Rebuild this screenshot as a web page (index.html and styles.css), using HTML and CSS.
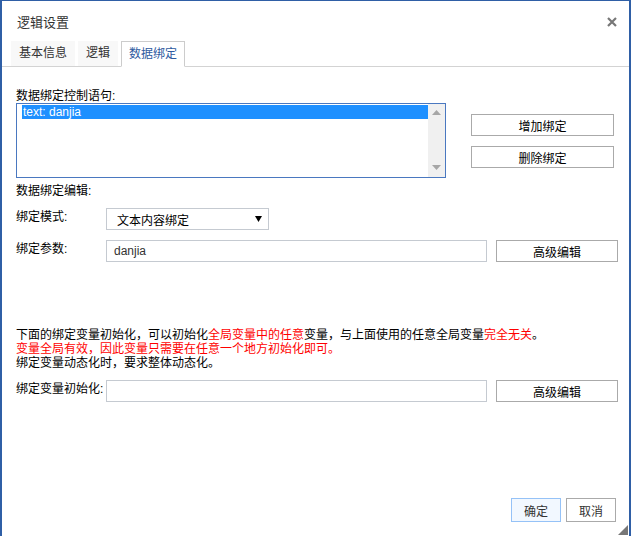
FILE: index.html
```html
<!DOCTYPE html>
<html lang="zh-CN">
  <head>
    <meta charset="UTF-8" />
    <meta name="viewport" content="width=device-width, initial-scale=1.0" />
    <title>逻辑设置</title>
    <link rel="stylesheet" href="styles.css">
  </head>
  <body>
    <div class="dialog">
      <div class="dialog-head">
        <span class="dialog-title">逻辑设置</span>
        <span class="dialog-close">
          <svg width="10" height="10" viewBox="0 0 10 10">
            <path d="M1 1 L9 9 M9 1 L1 9" stroke="#777" stroke-width="2.2" />
          </svg>
        </span>
      </div>

      <div class="tabs">
        <div class="tab">基本信息</div>
        <div class="tab">逻辑</div>
        <div class="tab tab-active">数据绑定</div>
      </div>

      <div class="panel">
        <p class="caption caption-top">数据绑定控制语句:</p>
        <div class="bind-list-row">
          <div class="listbox">
            <div class="listbox-items">
              <div class="listbox-item selected">text: danjia</div>
            </div>
            <div class="scrollbar">
              <svg width="9" height="5" viewBox="0 0 9 5">
                <path d="M0 5 L4.5 0 L9 5 Z" fill="#a6a6a6" />
              </svg>
              <svg width="9" height="5" viewBox="0 0 9 5">
                <path d="M0 0 L9 0 L4.5 5 Z" fill="#a6a6a6" />
              </svg>
            </div>
          </div>
          <div class="side-buttons">
            <button class="btn btn-side">增加绑定</button>
            <button class="btn btn-side">删除绑定</button>
          </div>
        </div>

        <p class="caption caption-edit">数据绑定编辑:</p>

        <div class="form-row">
          <span class="form-label">绑定模式:</span>
          <div class="select">
            <span>文本内容绑定</span>
            <svg width="7" height="6" viewBox="0 0 7 6">
              <path d="M0 0 L7 0 L3.5 6 Z" fill="#000" />
            </svg>
          </div>
        </div>

        <div class="form-row">
          <span class="form-label">绑定参数:</span>
          <div class="text-input">danjia</div>
          <button class="btn btn-edit">高级编辑</button>
        </div>

        <p class="note">
          下面的绑定变量初始化，可以初始化<span class="red">全局变量中的任意</span>变量，与上面使用的任意全局变量<span class="red">完全无关</span>。<br>
          <span class="red">变量全局有效，因此变量只需要在任意一个地方初始化即可。</span><br>
          绑定变量动态化时，要求整体动态化。
        </p>

        <div class="form-row">
          <span class="form-label">绑定变量初始化:</span>
          <div class="text-input"></div>
          <button class="btn btn-edit">高级编辑</button>
        </div>
      </div>

      <div class="dialog-foot">
        <button class="btn btn-foot btn-ok">确定</button>
        <button class="btn btn-foot">取消</button>
      </div>

      <svg class="grip" width="10" height="10" viewBox="0 0 10 10">
        <path d="M10 0 L10 10 L0 10 Z" fill="#777" />
      </svg>
    </div>
  </body>
</html>
```

FILE: styles.css
```css
html,
body {
  margin: 0;
  height: 100%;
  overflow: hidden;
  background-color: white;
}

body {
  font-family: "Liberation Sans", "Noto Sans CJK SC", sans-serif;
  font-size: 12px;
  color: #000;
}

.dialog {
  position: relative;
  box-sizing: border-box;
  width: 631px;
  height: 536px;
  border-top: 1px solid #2f5fa6;
  border-left: 2px solid #2f5fa6;
  border-right: 2px solid #2f5fa6;
}

.dialog-head {
  height: 40px;
  display: flex;
  align-items: center;
  justify-content: space-between;
  padding: 0 12px 0 15px;
}

.dialog-title {
  font-size: 13px;
  color: #333;
}

.dialog-close {
  display: flex;
  margin-top: 2px;
}

.tabs {
  display: flex;
  align-items: flex-end;
  gap: 3px;
  height: 25px;
  padding-left: 9px;
  border-bottom: 1px solid #d3d3d3;
}

.tab {
  box-sizing: border-box;
  height: 25px;
  line-height: 25px;
  padding: 0 8px;
  background-color: #f8f8f8;
  color: #333;
}

.tab-active {
  height: 26px;
  line-height: 24px;
  margin-bottom: -1px;
  padding: 0 7px;
  background-color: white;
  color: #2e5aa0;
  border: 1px solid #cccccc;
  border-bottom-color: white;
}

.panel {
  padding: 0 8px 0 14px;
}

.caption {
  margin: 0;
  line-height: 14px;
}

.caption-top {
  margin-top: 22px;
}

.caption-edit {
  margin-top: 6px;
}

.bind-list-row {
  display: flex;
}

.listbox {
  box-sizing: border-box;
  width: 430px;
  height: 75px;
  border: 1px solid #4a78c0;
  display: flex;
}

.listbox-items {
  flex: 1;
  padding: 1px 0 0 5px;
}

.listbox-item {
  height: 14px;
  line-height: 14px;
  padding-left: 1px;
}

.selected {
  background-color: #1e90ff;
  color: white;
}

.scrollbar {
  width: 17px;
  background-color: #f0f0f0;
  display: flex;
  flex-direction: column;
  align-items: center;
  justify-content: space-between;
  padding: 6px 0 7px;
  box-sizing: border-box;
}

.side-buttons {
  display: flex;
  flex-direction: column;
  gap: 10px;
  margin-left: 25px;
  padding-top: 11px;
}

.btn {
  box-sizing: border-box;
  font-family: "Liberation Sans", "Noto Sans CJK SC", sans-serif;
  font-size: 12px;
  color: #000;
  background-color: white;
  border: 1px solid #aaaaaa;
  padding: 0;
  margin: 0;
  flex-shrink: 0;
}

.btn-side {
  width: 143px;
  height: 22px;
}

.form-row {
  display: flex;
  align-items: flex-start;
  margin-top: 10px;
}

.form-label {
  width: 90px;
  flex-shrink: 0;
  padding-top: 2px;
  line-height: 14px;
}

.select {
  box-sizing: border-box;
  width: 163px;
  height: 22px;
  border: 1px solid #c5cad1;
  padding: 0 6px 0 10px;
  display: flex;
  align-items: center;
  justify-content: space-between;
}

.text-input {
  box-sizing: border-box;
  width: 381px;
  flex-shrink: 0;
  height: 22px;
  line-height: 20px;
  border: 1px solid #c5cad1;
  padding-left: 7px;
  color: #333;
}

.btn-edit {
  width: 122px;
  height: 22px;
  margin-left: 9px;
}

.note {
  margin: 66px 0 0;
  line-height: 14px;
}

.red {
  color: #ff0000;
}

.dialog-foot {
  display: flex;
  justify-content: flex-end;
  gap: 5px;
  margin-top: 96px;
  padding-right: 13px;
}

.btn-foot {
  width: 50px;
  height: 24px;
  color: #333;
}

.btn-ok {
  background-color: #f2f8ff;
  border-color: #95c2f7;
}

.grip {
  position: absolute;
  right: 1px;
  bottom: 1px;
}
```
